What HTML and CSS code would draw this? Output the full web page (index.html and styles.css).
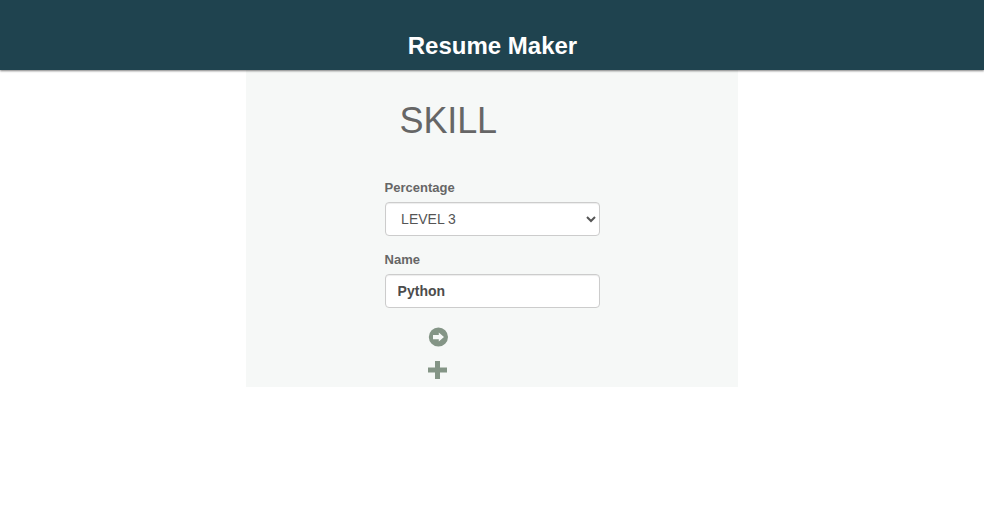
FILE: index.html
```html
<!DOCTYPE html>
<html lang="en">
<head>
<meta charset="utf-8">
<title>Resume Maker</title>
<link rel="stylesheet" href="styles.css">
</head>
<body>
<header class="topbar"><h1 class="brand">Resume Maker</h1></header>
<main class="panel">
  <h2 class="title">SKILL</h2>
  <form class="form">
    <label class="label" for="level">Percentage</label>
    <select class="control select" id="level"><option>LEVEL 3</option></select>
    <label class="label" for="name">Name</label>
    <input class="control input" id="name" type="text" value="Python">
    <div class="actions">
      <svg class="icon" viewBox="0 0 20 20"><path fill-rule="evenodd" d="M10.400 .4a9.600 9.600 0 1 0 0 19.200A9.600 9.600 0 0 0 10.400 .4zM10.800 5.600l5.200 4.500-5.200 4.500V12.200H5V8h5.800z"/></svg>
      <svg class="icon" viewBox="0 0 20 20"><path d="M7 1h5v6.500h7v5h-7V19H7v-6.500H0v-5h7z"/></svg>
    </div>
  </form>
</main>
</body>
</html>
```
FILE: styles.css
```css
* { box-sizing: border-box; }
body { margin: 0; background: #fff; font-family: "Liberation Sans", Arial, sans-serif; color: #666; }
.topbar { height: 70px; padding: 32px 0 0 1px; background: #1f434f; text-align: center; box-shadow: 0 1px 2px rgba(0,0,0,.5); position: relative; }
.brand { margin: 0; font-size: 24px; line-height: 28px; color: #fff; }
.panel { width: 492px; height: 317px; margin: 0 auto; padding: 31px 138px 0 138.6px; background: #f6f8f7; }
.title { margin: 0 0 38px 15px; font-size: 36px; line-height: 40px; font-weight: 400; letter-spacing: -.15px; }
.form { display: flex; flex-direction: column; }
.label { font-size: 13px; line-height: 18px; font-weight: 700; margin-bottom: 5px; }
.control { width: 215px; height: 34px; margin: 0 0 15px; border: 1px solid #ccc; border-radius: 4px; background: #fff; color: #555; font: 14px/20px "Liberation Sans", Arial, sans-serif; box-shadow: inset 0 1px 1px rgba(0,0,0,.075); }
.select { padding: 6px 1px 6px 11.5px; }
.input { padding: 6px 12px; font-weight: 700; color: #4c4c4c; }
.actions { display: flex; flex-direction: column; gap: 13px; padding: 4px 0 0 43.4px; }
.icon { width: 20px; height: 20px; fill: #849586; }
```
